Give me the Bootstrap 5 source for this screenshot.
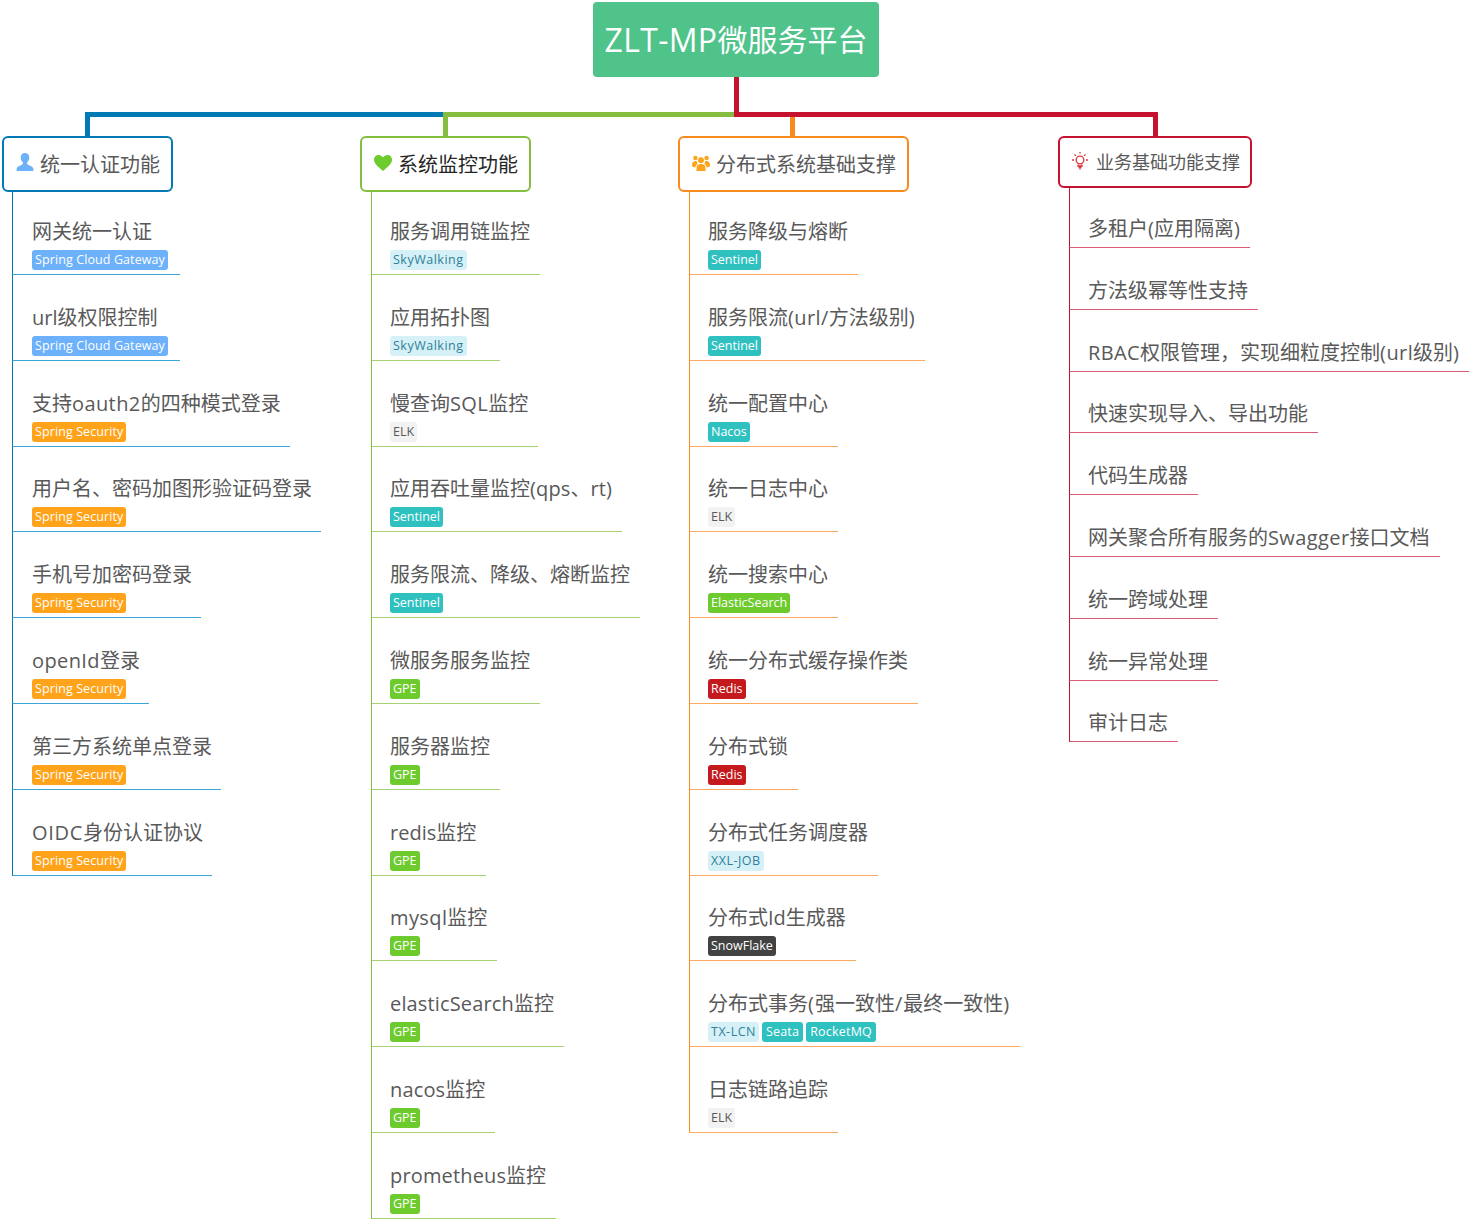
<!DOCTYPE html>
<html lang="zh-CN">
<head>
<meta charset="utf-8">
<title>ZLT-MP微服务平台</title>
<link rel="stylesheet" href="https://cdn.jsdelivr.net/npm/bootstrap@5.3.0/dist/css/bootstrap.min.css">
<style>
html,body{background:#fff;margin:0}
.mm-canvas{position:relative;width:1476px;height:1222px;overflow:hidden;font-family:"Open Sans","Noto Sans CJK SC",sans-serif;color:#595959}
.mm-links{position:absolute;left:0;top:0}
.mm-root{position:absolute;left:593px;top:2px;width:286px;height:75px;background:#4fc38a;border-radius:4px;color:#fff;font-size:30px;white-space:nowrap}
.mm-root-lat{font-size:32px;letter-spacing:.3px}
.mm-lat{letter-spacing:.4px}
.mm-tight{letter-spacing:.15px}
.mm-mid{letter-spacing:.7px}
.mm-punc{letter-spacing:1px}
.mm-branch{position:absolute;top:136px}
.b1{left:2px;--c:#0079b5;--l:#3ea6d6}
.b2{left:360px;--c:#84bd3f;--l:#a5d173}
.b3{left:678px;--c:#f98a1e;--l:#fba95e}
.b4{left:1058px;--c:#c4122f;--l:#dc5a74}
.mm-head{width:fit-content;height:56px;border:2px solid var(--c);border-radius:6px;padding:1px 11px 0 12px;font-size:20px;background:#fff;white-space:nowrap;gap:6px}
.mm-head svg{margin-bottom:4px}
.b1 .mm-head svg{margin-bottom:5px}
.b2 .mm-head{color:#262626}
.b4 .mm-head{height:52px;font-size:18px;padding:1px 10px 0 12px;gap:8px}
.mm-list{margin:0 0 0 10px;padding:0;list-style:none}
.b2 .mm-list{margin-left:11px}
.b3 .mm-list{margin-left:11px}
.b4 .mm-list{margin-left:11px}
.mm-item{width:fit-content;height:85.8px;border-left:1px solid var(--c);border-bottom:1px solid var(--l);padding:0 9px 4px 19px;white-space:nowrap;justify-content:flex-end}
.b2 .mm-item,.b3 .mm-item,.b4 .mm-item{padding-left:18px;padding-right:10px}
.mm-item:first-child{height:83px}
.b4 .mm-item{height:61.8px;padding-bottom:3px}
.b4 .mm-item:first-child{height:60px}
.mm-text{font-size:20px;line-height:26px;margin-bottom:5px}
.b4 .mm-text{margin-bottom:0;padding-bottom:2px}
.mm-tag{font-size:12.5px;line-height:20px;height:20px;padding:0 3px;border-radius:3px;margin-right:3px;font-weight:400}
.mm-blue{background:#6db1fb;color:#fff;font-weight:500;letter-spacing:.1px}
.mm-orange{background:#ffa31a;color:#fff;font-weight:500;letter-spacing:.1px}
.mm-teal{background:#2fc1c0;color:#fff;font-weight:500}
.mm-roomy{padding:0 4px;letter-spacing:.2px}
.mm-green{background:#6dcb2e;color:#fff;font-weight:500}
.mm-red{background:#c41a1e;color:#fff;font-weight:500}
.mm-dark{background:#424242;color:#fff;font-weight:500}
.mm-grey{background:#f2f2f2;color:#595959}
.mm-pale{background:#d5f1f7;color:#2f7f9a;letter-spacing:.5px}
</style>
</head>
<body>
<div class="mm-canvas">
<svg class="mm-links" width="1476" height="140" viewBox="0 0 1476 140" fill="none" stroke-width="5">
<path d="M87.5 137V114.500H445" stroke="#0079b5"/>
<path d="M445.500 137V114.500H737" stroke="#84bd3f"/>
<path d="M792.500 137V117" stroke="#f98a1e"/>
<path d="M736.500 77V114.500H1155.500V137" stroke="#c4122f"/>
</svg>
<div class="mm-root d-flex align-items-center justify-content-center"><span class="mm-root-lat">ZLT-MP</span>微服务平台</div>

<section class="mm-branch b1">
<div class="mm-head d-flex align-items-center">
<svg width="18" height="18" viewBox="0 0 18 18"><path fill="#6db1fb" d="M9 0c2.700 0 4.300 2.100 4.300 4.700 0 2-1 3.700-2.200 4.600v1.300c0 .9 1 1.300 2.400 1.900 2 .8 3.700 1.600 3.900 3.200V18H.6v-2.300c.2-1.600 1.900-2.400 3.900-3.200 1.400-.6 2.400-1 2.400-1.900V9.300C5.700 8.400 4.700 6.700 4.700 4.700 4.700 2.100 6.300 0 9 0z"/></svg>
<span>统一认证功能</span></div>
<ul class="mm-list">
<li class="mm-item d-flex flex-column"><div class="mm-text">网关统一认证</div><div class="d-flex"><span class="mm-tag mm-blue">Spring Cloud Gateway</span></div></li>
<li class="mm-item d-flex flex-column"><div class="mm-text">url级权限控制</div><div class="d-flex"><span class="mm-tag mm-blue">Spring Cloud Gateway</span></div></li>
<li class="mm-item d-flex flex-column"><div class="mm-text">支持<span class="mm-lat">oauth2</span>的四种模式登录</div><div class="d-flex"><span class="mm-tag mm-orange">Spring Security</span></div></li>
<li class="mm-item d-flex flex-column"><div class="mm-text">用户名、密码加图形验证码登录</div><div class="d-flex"><span class="mm-tag mm-orange">Spring Security</span></div></li>
<li class="mm-item d-flex flex-column"><div class="mm-text">手机号加密码登录</div><div class="d-flex"><span class="mm-tag mm-orange">Spring Security</span></div></li>
<li class="mm-item d-flex flex-column"><div class="mm-text"><span class="mm-lat">openId</span>登录</div><div class="d-flex"><span class="mm-tag mm-orange">Spring Security</span></div></li>
<li class="mm-item d-flex flex-column"><div class="mm-text">第三方系统单点登录</div><div class="d-flex"><span class="mm-tag mm-orange">Spring Security</span></div></li>
<li class="mm-item d-flex flex-column"><div class="mm-text"><span class="mm-mid">OIDC</span>身份认证协议</div><div class="d-flex"><span class="mm-tag mm-orange">Spring Security</span></div></li>
</ul>
</section>

<section class="mm-branch b2">
<div class="mm-head d-flex align-items-center">
<svg width="18" height="16" viewBox="0 0 18 16"><path fill="#6dcb2e" d="M9 16C3 11 0 8.300 0 4.800 0 2 2.100 0 4.700 0 6.400 0 8 .9 9 2.400 10 .9 11.600 0 13.300 0 15.900 0 18 2 18 4.800 18 8.300 15 11 9 16z"/></svg>
<span>系统监控功能</span></div>
<ul class="mm-list">
<li class="mm-item d-flex flex-column"><div class="mm-text">服务调用链监控</div><div class="d-flex"><span class="mm-tag mm-pale">SkyWalking</span></div></li>
<li class="mm-item d-flex flex-column"><div class="mm-text">应用拓扑图</div><div class="d-flex"><span class="mm-tag mm-pale">SkyWalking</span></div></li>
<li class="mm-item d-flex flex-column"><div class="mm-text">慢查询<span class="mm-lat">SQL</span>监控</div><div class="d-flex"><span class="mm-tag mm-grey">ELK</span></div></li>
<li class="mm-item d-flex flex-column"><div class="mm-text">应用吞吐量监控<span class="mm-tight">(qps</span>、<span class="mm-tight">rt)</span></div><div class="d-flex"><span class="mm-tag mm-teal">Sentinel</span></div></li>
<li class="mm-item d-flex flex-column"><div class="mm-text">服务限流、降级、熔断监控</div><div class="d-flex"><span class="mm-tag mm-teal">Sentinel</span></div></li>
<li class="mm-item d-flex flex-column"><div class="mm-text">微服务服务监控</div><div class="d-flex"><span class="mm-tag mm-green">GPE</span></div></li>
<li class="mm-item d-flex flex-column"><div class="mm-text">服务器监控</div><div class="d-flex"><span class="mm-tag mm-green">GPE</span></div></li>
<li class="mm-item d-flex flex-column"><div class="mm-text">redis监控</div><div class="d-flex"><span class="mm-tag mm-green">GPE</span></div></li>
<li class="mm-item d-flex flex-column"><div class="mm-text"><span class="mm-lat">mysql</span>监控</div><div class="d-flex"><span class="mm-tag mm-green">GPE</span></div></li>
<li class="mm-item d-flex flex-column"><div class="mm-text"><span class="mm-tight">elasticSearch</span>监控</div><div class="d-flex"><span class="mm-tag mm-green">GPE</span></div></li>
<li class="mm-item d-flex flex-column"><div class="mm-text"><span class="mm-tight">nacos</span>监控</div><div class="d-flex"><span class="mm-tag mm-green">GPE</span></div></li>
<li class="mm-item d-flex flex-column"><div class="mm-text"><span class="mm-tight">prometheus</span>监控</div><div class="d-flex"><span class="mm-tag mm-green">GPE</span></div></li>
</ul>
</section>

<section class="mm-branch b3">
<div class="mm-head d-flex align-items-center">
<svg width="18" height="16" viewBox="0 0 18 16" fill="#ffa31a"><circle cx="9" cy="5.200" r="2.900"/><circle cx="3.400" cy="3" r="2.200"/><circle cx="14.600" cy="3" r="2.200"/><path d="M4.500 16v-3c0-2.600 1.600-4 4.500-4s4.500 1.400 4.500 4v3z"/><path d="M0 10.500C0 7.500 1.300 6 3.300 6c.7 0 1.300.2 1.700.5-.2 1.200.3 2 .9 2.600-1.600.7-2.500 1.900-2.600 3.400-2.100-.2-3.300-.9-3.300-2zM18 10.500c0-3-1.300-4.500-3.300-4.500-.7 0-1.300.2-1.700.5.2 1.200-.3 2-.9 2.600 1.600.7 2.500 1.900 2.600 3.400 2.100-.2 3.300-.9 3.300-2z"/></svg>
<span>分布式系统基础支撑</span></div>
<ul class="mm-list">
<li class="mm-item d-flex flex-column"><div class="mm-text">服务降级与熔断</div><div class="d-flex"><span class="mm-tag mm-teal">Sentinel</span></div></li>
<li class="mm-item d-flex flex-column"><div class="mm-text">服务限流<span class="mm-lat">(url/</span>方法级别)</div><div class="d-flex"><span class="mm-tag mm-teal">Sentinel</span></div></li>
<li class="mm-item d-flex flex-column"><div class="mm-text">统一配置中心</div><div class="d-flex"><span class="mm-tag mm-teal">Nacos</span></div></li>
<li class="mm-item d-flex flex-column"><div class="mm-text">统一日志中心</div><div class="d-flex"><span class="mm-tag mm-grey">ELK</span></div></li>
<li class="mm-item d-flex flex-column"><div class="mm-text">统一搜索中心</div><div class="d-flex"><span class="mm-tag mm-green">ElasticSearch</span></div></li>
<li class="mm-item d-flex flex-column"><div class="mm-text">统一分布式缓存操作类</div><div class="d-flex"><span class="mm-tag mm-red">Redis</span></div></li>
<li class="mm-item d-flex flex-column"><div class="mm-text">分布式锁</div><div class="d-flex"><span class="mm-tag mm-red">Redis</span></div></li>
<li class="mm-item d-flex flex-column"><div class="mm-text">分布式任务调度器</div><div class="d-flex"><span class="mm-tag mm-pale">XXL-JOB</span></div></li>
<li class="mm-item d-flex flex-column"><div class="mm-text">分布式Id生成器</div><div class="d-flex"><span class="mm-tag mm-dark">SnowFlake</span></div></li>
<li class="mm-item d-flex flex-column"><div class="mm-text">分布式事务<span class="mm-punc">(</span>强一致性<span class="mm-punc">/</span>最终一致性<span class="mm-punc">)</span></div><div class="d-flex"><span class="mm-tag mm-pale">TX-LCN</span><span class="mm-tag mm-teal mm-roomy">Seata</span><span class="mm-tag mm-teal mm-roomy">RocketMQ</span></div></li>
<li class="mm-item d-flex flex-column"><div class="mm-text">日志链路追踪</div><div class="d-flex"><span class="mm-tag mm-grey">ELK</span></div></li>
</ul>
</section>

<section class="mm-branch b4">
<div class="mm-head d-flex align-items-center">
<svg width="16" height="18" viewBox="0 0 16 18" fill="none" stroke="#d9363e" stroke-width="1.300"><circle cx="8" cy="8" r="3.800"/><path d="M6 12.500v1.500h4v-1.500M6.500 15.500h3M7.500 17h1M8 0v1.500M2.500 2.500l1.400 1.400M13.500 2.500l-1.400 1.400M0 8h2M14 8h2"/></svg>
<span>业务基础功能支撑</span></div>
<ul class="mm-list">
<li class="mm-item d-flex flex-column"><div class="mm-text">多租户(应用隔离)</div></li>
<li class="mm-item d-flex flex-column"><div class="mm-text">方法级幂等性支持</div></li>
<li class="mm-item d-flex flex-column"><div class="mm-text"><span class="mm-lat">RBAC</span>权限管理，实现细粒度控制<span class="mm-lat">(url</span>级别)</div></li>
<li class="mm-item d-flex flex-column"><div class="mm-text">快速实现导入、导出功能</div></li>
<li class="mm-item d-flex flex-column"><div class="mm-text">代码生成器</div></li>
<li class="mm-item d-flex flex-column"><div class="mm-text">网关聚合所有服务的<span class="mm-lat">Swagger</span>接口文档</div></li>
<li class="mm-item d-flex flex-column"><div class="mm-text">统一跨域处理</div></li>
<li class="mm-item d-flex flex-column"><div class="mm-text">统一异常处理</div></li>
<li class="mm-item d-flex flex-column"><div class="mm-text">审计日志</div></li>
</ul>
</section>
</div>
<script src="https://cdn.jsdelivr.net/npm/bootstrap@5.3.0/dist/js/bootstrap.bundle.min.js"></script>
</body>
</html>
